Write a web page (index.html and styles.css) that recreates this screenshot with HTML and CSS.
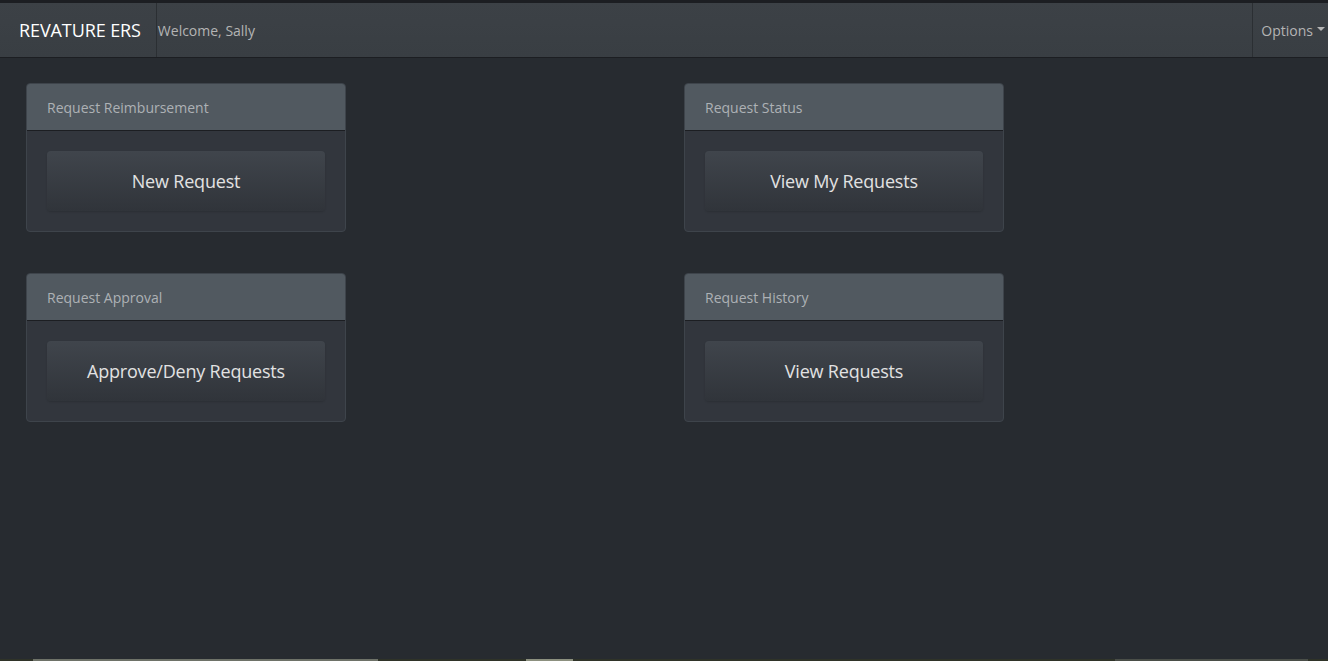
FILE: index.html
```html
<!DOCTYPE html>
<html lang="en">
<head>
<meta charset="utf-8">
<title>Revature ERS</title>
<link rel="stylesheet" href="styles.css">
</head>
<body>
<div class="page">
  <nav class="navbar">
    <div class="brand">REVATURE ERS</div>
    <div class="welcome">Welcome, Sally</div>
    <div class="options">Options<span class="caret"></span></div>
  </nav>
  <main class="grid">
    <section class="panel">
      <div class="panel-head">Request Reimbursement</div>
      <div class="panel-body"><button class="btn">New Request</button></div>
    </section>
    <section class="panel">
      <div class="panel-head">Request Status</div>
      <div class="panel-body"><button class="btn">View My Requests</button></div>
    </section>
    <section class="panel">
      <div class="panel-head">Request Approval</div>
      <div class="panel-body"><button class="btn">Approve/Deny Requests</button></div>
    </section>
    <section class="panel">
      <div class="panel-head">Request History</div>
      <div class="panel-body"><button class="btn">View Requests</button></div>
    </section>
  </main>
  <div class="strip">
    <span class="seg seg-a"></span>
    <span class="seg seg-b"></span>
    <span class="seg seg-c"></span>
  </div>
</div>
</body>
</html>
```

FILE: styles.css
```css
* { box-sizing: border-box; }
html, body { margin: 0; padding: 0; }
body {
  background: #272b30;
  font-family: "Open Sans", "Noto Sans", sans-serif;
  color: #c8c8c8;
}
.page {
  height: 661px;
  display: flex;
  flex-direction: column;
  border-top: 3px solid #1c1e22;
  overflow: hidden;
}
.navbar {
  height: 55px;
  flex: none;
  display: flex;
  align-items: stretch;
  background: linear-gradient(#3c4146, #393e43);
  border-bottom: 1px solid #1c1e22;
}
.brand {
  display: flex;
  align-items: center;
  padding: 0 15px 0 19px;
  font-size: 18px;
  letter-spacing: -0.1px;
  color: #ffffff;
  border-right: 1px solid #2b2f33;
}
.welcome {
  display: flex;
  align-items: center;
  padding-left: 1px;
  font-size: 14px;
  color: #b4b4b4;
  flex: 1;
}
.options {
  display: flex;
  align-items: center;
  padding: 0 3px 0 8px;
  font-size: 14px;
  color: #b4b4b4;
  border-left: 1px solid #2b2f33;
}
.caret {
  display: inline-block;
  margin-left: 4px;
  margin-top: -2px;
  border-left: 4px solid transparent;
  border-right: 4px solid transparent;
  border-top: 4px solid #b4b4b4;
}
.grid {
  flex: 1;
  display: grid;
  grid-template-columns: 658px 658px;
  grid-auto-rows: 149px;
  row-gap: 41px;
  padding: 25px 0 0 26px;
  align-content: start;
}
.panel {
  width: 320px;
  height: 149px;
  border: 1px solid #3e444b;
  border-radius: 4px;
  background: #32363d;
  overflow: hidden;
  display: flex;
  flex-direction: column;
}
.panel-head {
  height: 47px;
  flex: none;
  display: flex;
  align-items: center;
  padding-left: 20px;
  background: #515960;
  border-bottom: 1px solid #1c1e22;
  font-size: 14px;
  color: #adb1b5;
}
.panel-body {
  flex: 1;
  padding: 20px 20px 0 20px;
}
.btn {
  width: 278px;
  height: 60px;
  border: none;
  border-radius: 4px;
  background: linear-gradient(#40454c, #30343a);
  box-shadow: 0 1px 2px rgba(0,0,0,0.15);
  font-family: "Open Sans", "Noto Sans", sans-serif;
  font-size: 18px;
  letter-spacing: -0.2px;
  color: #e2e2e2;
  cursor: pointer;
}
.strip {
  flex: none;
  height: 2px;
  background: #2f3328;
  position: relative;
}
.seg {
  position: absolute;
  top: 0;
  height: 2px;
  background: #6e7268;
}
.seg-a { left: 33px; width: 345px; }
.seg-b { left: 526px; width: 47px; background: #8c907f; }
.seg-c { left: 1115px; width: 193px; background: #4a4e48; }
```
